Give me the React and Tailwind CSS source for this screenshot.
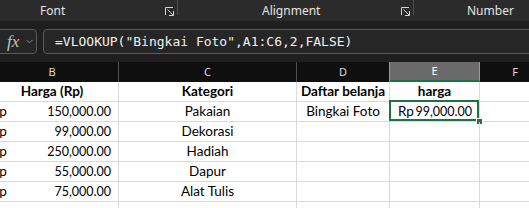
import React from "react";
import { ChevronDown } from "lucide-react";

const Launcher = () => (
  <svg width="9" height="9" viewBox="0 0 9 9" fill="none" stroke="#d4d4d4" strokeWidth="1">
    <path d="M0.5 8V0.5H8" />
    <path d="M2.5 2.5L8 8" />
    <path d="M8.5 4V8.5H4" />
  </svg>
);

const rows = [
  { head: true, b: "Harga (Rp)", c: "Kategori", d: "Daftar belanja", e: "harga" },
  { b: "150,000.00", c: "Pakaian", d: "Bingkai Foto", e: "99,000.00" },
  { b: "99,000.00", c: "Dekorasi" },
  { b: "250,000.00", c: "Hadiah" },
  { b: "55,000.00", c: "Dapur" },
  { b: "75,000.00", c: "Alat Tulis" },
  {},
];

const cell = "h-[20px] border-r border-b border-[#d9d9d9] flex items-end pb-[3px] leading-none overflow-hidden whitespace-nowrap";

function Acc({ v }) {
  return (
    <div className="flex-1 flex items-end justify-between pl-[8px] pr-[7px]">
      <span>Rp</span>
      <span className="text-[12.5px]">{v}</span>
    </div>
  );
}

export default function App() {
  return (
    <div className="w-[529px] h-[208px] overflow-hidden bg-white">
      {/* Ribbon group labels */}
      <div className="h-[21px] bg-[#2b2b2b] flex text-[12px] text-[#e4e4e4] font-['Noto_Sans',sans-serif]">
        <div className="w-[177px] flex items-center">
          <span className="pl-[40px]">Font</span>
          <span className="ml-auto mr-[3px] self-start mt-[7px] flex">
            <Launcher />
          </span>
        </div>
        <div className="w-px h-[15px] bg-[#4e4e4e]" />
        <div className="w-[235px] flex items-center">
          <span className="pl-[84px]">Alignment</span>
          <span className="ml-auto mr-[3px] self-start mt-[7px] flex">
            <Launcher />
          </span>
        </div>
        <div className="w-px h-[15px] bg-[#4e4e4e]" />
        <div className="flex-1 flex items-center">
          <span className="pl-[53px]">Number</span>
        </div>
      </div>

      {/* Formula bar */}
      <div className="h-[41px] bg-[#1f1f1f] flex items-start pt-[8px] gap-[6px]">
        <div className="ml-[-5px] w-[42px] h-[25px] rounded-[4px] border border-[#5a5a5a] bg-[#262626] flex items-center pl-[11px] gap-[5px]">
          <span className="font-['Liberation_Serif',serif] italic text-[17px] leading-none text-[#c4c4c4]">fx</span>
          <ChevronDown size={11} color="#b0b0b0" strokeWidth={1.5} />
        </div>
        <div className="flex-1 mr-[-10px] h-[25px] rounded-[4px] border border-[#5a5a5a] bg-[#262626] flex items-center pl-[11px] font-['DejaVu_Sans_Mono',monospace] text-[13px] text-[#f0f0f0] whitespace-nowrap">
          =VLOOKUP("Bingkai Foto",A1:C6,2,FALSE)
        </div>
      </div>

      {/* Column headers */}
      <div className="ml-[-17px] grid grid-cols-[136px_178px_93px_90px_100px] h-[20px] bg-[#0f0f0f] text-[11px] text-[#dcdcdc] font-['Noto_Sans',sans-serif]">
        <div className="border-r border-[#4f4f4f] flex items-center justify-center pl-[3px]">B</div>
        <div className="border-r border-[#4f4f4f] flex items-center justify-center">C</div>
        <div className="border-r border-[#9a9a9a] flex items-center justify-center">D</div>
        <div className="bg-[#6a6a6a] border-r border-[#9a9a9a] border-b-2 border-b-[#1f7244] flex items-center justify-center text-white">E</div>
        <div className="flex items-center justify-center pr-[30px]">F</div>
      </div>

      {/* Grid */}
      <div className="ml-[-17px] grid grid-cols-[136px_178px_93px_90px_100px] text-[13.5px] text-black font-['Lato',sans-serif]">
        {rows.map((r, i) => (
          <React.Fragment key={i}>
            <div className={`${cell} ${r.head ? "justify-center font-bold pl-[3px]" : ""}`}>
              {r.head ? r.b : r.b ? <Acc v={r.b} /> : null}
            </div>
            <div className={`${cell} justify-center ${r.head ? "font-bold" : ""}`}>{r.c}</div>
            <div className={`${cell} justify-center ${r.head ? "font-bold" : ""}`}>{r.d}</div>
            <div className={`${cell} relative overflow-visible ${r.head ? "justify-center font-bold" : ""}`}>
              {r.head ? r.e : r.e ? <Acc v={r.e} /> : null}
              {i === 1 && (
                <>
                  <div className="absolute left-[-1px] top-[-2px] right-0 bottom-0 border-2 border-[#1f7244]" />
                  <div className="absolute right-[-4px] bottom-[-4px] w-[7px] h-[7px] bg-[#1f7244] border border-white" />
                </>
              )}
            </div>
            <div className={`${cell} border-r-0`} />
          </React.Fragment>
        ))}
      </div>
    </div>
  );
}
